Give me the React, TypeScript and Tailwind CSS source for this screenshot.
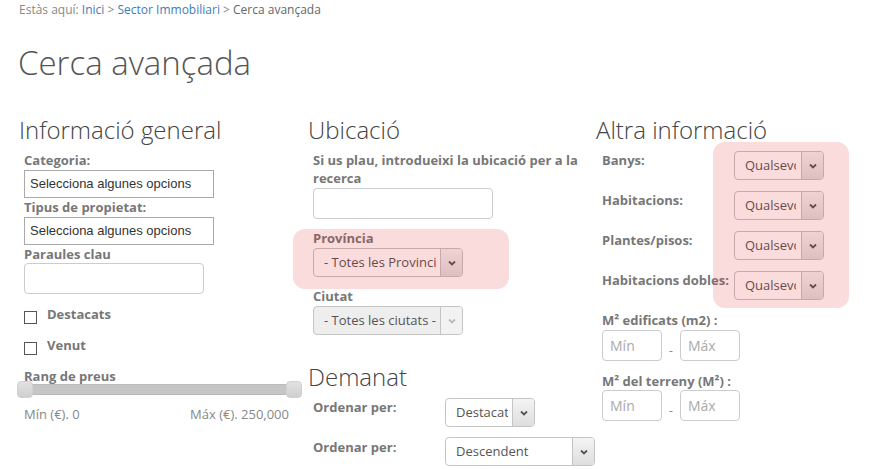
import React from "react";

const font = { fontFamily: '"Open Sans", "Liberation Sans", sans-serif' };

function Chevron({ color = "#555" }: { color?: string }) {
  return (
    <svg width="8" height="6" viewBox="0 0 8 6">
      <path d="M1 1.5 L4 4.5 L7 1.5" fill="none" stroke={color} strokeWidth="1.8" />
    </svg>
  );
}

function Select({
  text,
  width,
  disabled = false,
  clip = "pr-[4px]",
}: {
  text: string;
  width: string;
  disabled?: boolean;
  clip?: string;
}) {
  return (
    <div
      className={`flex h-[29px] ${width} overflow-hidden rounded-[4px] border border-[#c4c4c4] ${
        disabled ? "bg-[#eeeeee]" : "bg-white"
      }`}
    >
      <div className={`flex min-w-0 flex-1 items-center pl-[10px] ${clip}`}>
        <div className="min-w-0 flex-1 overflow-hidden whitespace-nowrap text-[13px] text-[#555]">{text}</div>
      </div>
      <div
        className={`flex w-[22px] shrink-0 items-center justify-center border-l border-[#c4c4c4] ${
          disabled ? "bg-[#f2f2f2]" : "bg-gradient-to-b from-[#f4f4f4] to-[#dedede]"
        }`}
      >
        <Chevron color={disabled ? "#bbb" : "#555"} />
      </div>
    </div>
  );
}

function Label({ children, className = "" }: { children: React.ReactNode; className?: string }) {
  return <div className={`text-[13px] font-bold leading-[18px] text-[#777] ${className}`}>{children}</div>;
}

function Heading({ children }: { children: React.ReactNode }) {
  return <h2 className="text-[24px] font-light leading-[30px] text-[#444]">{children}</h2>;
}

function Highlight({ className, children }: { className: string; children: React.ReactNode }) {
  return (
    <div className={`relative ${className}`}>
      {children}
      <div className="pointer-events-none absolute inset-0 rounded-[12px] bg-[rgba(230,20,20,0.15)]" />
    </div>
  );
}

function Checkbox({ label }: { label: string }) {
  return (
    <div className="flex items-start gap-[10px]">
      <div className="mt-[6px] h-[13px] w-[13px] border border-[#555] bg-white" />
      <Label>{label}</Label>
    </div>
  );
}

function SmallInput({ placeholder }: { placeholder: string }) {
  return (
    <div className="flex h-[31px] w-[60px] items-center rounded-[4px] border border-[#ccc] pl-[7px] text-[14px] text-[#aaa]">
      {placeholder}
    </div>
  );
}

function MultiInput() {
  return (
    <div
      className="mt-[1px] flex h-[28px] w-[190px] items-center border border-[#aaa] pl-[5px] text-[13px] text-[#333]"
      style={{ fontFamily: '"Liberation Sans", Arial, sans-serif' }}
    >
      Selecciona algunes opcions
    </div>
  );
}

function RangeRow() {
  return (
    <div className="flex items-center gap-[7px]">
      <SmallInput placeholder="Mín" />
      <span className="mt-[10px] text-[12px] leading-none text-[#888]">-</span>
      <SmallInput placeholder="Máx" />
    </div>
  );
}

export default function App() {
  return (
    <div className="h-[470px] w-[892px] overflow-hidden bg-white" style={font}>
      {/* breadcrumb */}
      <div className="pl-[19px] pt-[1px] text-[12px] leading-[18px] text-[#888]">
        Estàs aquí: <span className="text-[#3f7cb8]">Inici</span> <span>&gt;</span>{" "}
        <span className="text-[#3f7cb8]">Sector Immobiliari</span> <span>&gt;</span>{" "}
        <span className="text-[#666]">Cerca avançada</span>
      </div>

      <h1 className="mt-[24px] pl-[18px] text-[33px] font-light leading-[40px] text-[#555]">Cerca avançada</h1>

      <div className="mt-[32px] grid grid-cols-[289px_288px_1fr] pl-[19px]">
        {/* column 1 */}
        <div>
          <Heading>Informació general</Heading>
          <div className="pl-[5px] pt-[6px]">
            <Label>Categoria:</Label>
            <MultiInput />
            <Label>Tipus de propietat:</Label>
            <MultiInput />
            <Label>Paraules clau</Label>
            <div className="h-[31px] w-[180px] rounded-[4px] border border-[#ccc]" />
            <div className="mt-[11px] flex flex-col gap-[12px]">
              <Checkbox label="Destacats" />
              <Checkbox label="Venut" />
            </div>
            <Label className="mt-[12px]">Rang de preus</Label>
            <div className="relative -mt-[1px] h-[11px] w-[271px]">
              <div className="absolute inset-0 rounded-[3px] border border-[#bbb] bg-[#c6c6c6]" />
              <div className="absolute left-[-7px] top-[-3px] h-[17px] w-[16px] rounded-[4px] border border-[#d0d0d0] bg-gradient-to-b from-[#e2e2e2] to-[#cfcfcf]" />
              <div className="absolute right-[-7px] top-[-3px] h-[17px] w-[16px] rounded-[4px] border border-[#d0d0d0] bg-gradient-to-b from-[#e2e2e2] to-[#cfcfcf]" />
            </div>
            <div className="mt-[10px] flex w-[265px] justify-between text-[13px] leading-[18px] text-[#888]">
              <span>Mín (€). 0</span>
              <span>Máx (€). 250,000</span>
            </div>
          </div>
        </div>

        {/* column 2 */}
        <div>
          <Heading>Ubicació</Heading>
          <div className="pl-[5px] pt-[6px]">
            <Label className="w-[275px]">Si us plau, introdueixi la ubicació per a la recerca</Label>
            <div className="mt-[1px] h-[31px] w-[180px] rounded-[4px] border border-[#ccc]" />
            <Highlight className="-ml-[20px] mt-[12px] w-[216px] pb-[12px] pl-[20px]">
              <Label className="-mt-[2px]">Província</Label>
              <div className="mt-[1px]">
                <Select text="- Totes les Provincies -" width="w-[150px]" />
              </div>
            </Highlight>
            <Label className="-mt-[2px]">Ciutat</Label>
            <div className="mt-[1px]">
              <Select text="- Totes les ciutats -" width="w-[150px]" disabled />
            </div>
          </div>
          <div className="mt-[27px]">
            <Heading>Demanat</Heading>
          </div>
          <div className="pl-[5px]">
            <div className="mt-[6px] flex items-start">
              <Label className="w-[132px]">Ordenar per:</Label>
              <Select text="Destacat" width="w-[90px]" />
            </div>
            <div className="mt-[10px] flex items-start">
              <Label className="w-[132px] pt-[1px]">Ordenar per:</Label>
              <Select text="Descendent" width="w-[150px]" />
            </div>
          </div>
        </div>

        {/* column 3 */}
        <div>
          <Heading>Altra informació</Heading>
          <div className="flex items-start pl-[6px]">
            <div className="w-[132px] pt-[6px]">
              {["Banys:", "Habitacions:", "Plantes/pisos:", "Habitacions dobles:"].map((l) => (
                <Label key={l} className="h-[40px] whitespace-nowrap">
                  {l}
                </Label>
              ))}
            </div>
            <Highlight className="-ml-[21px] -mt-[3px] flex w-[136px] flex-col gap-[11px] pb-[8px] pl-[21px] pt-[9px]">
              {[0, 1, 2, 3].map((i) => (
                <Select key={i} text="Qualsevol" width="w-[90px]" clip="pr-[5px]" />
              ))}
            </Highlight>
          </div>
          <div className="pl-[6px]">
            <Label>M² edificats (m2) :</Label>
            <div className="mt-[1px]">
              <RangeRow />
            </div>
            <Label className="mt-[11px]">M² del terreny (M²) :</Label>
            <RangeRow />
          </div>
        </div>
      </div>
    </div>
  );
}
